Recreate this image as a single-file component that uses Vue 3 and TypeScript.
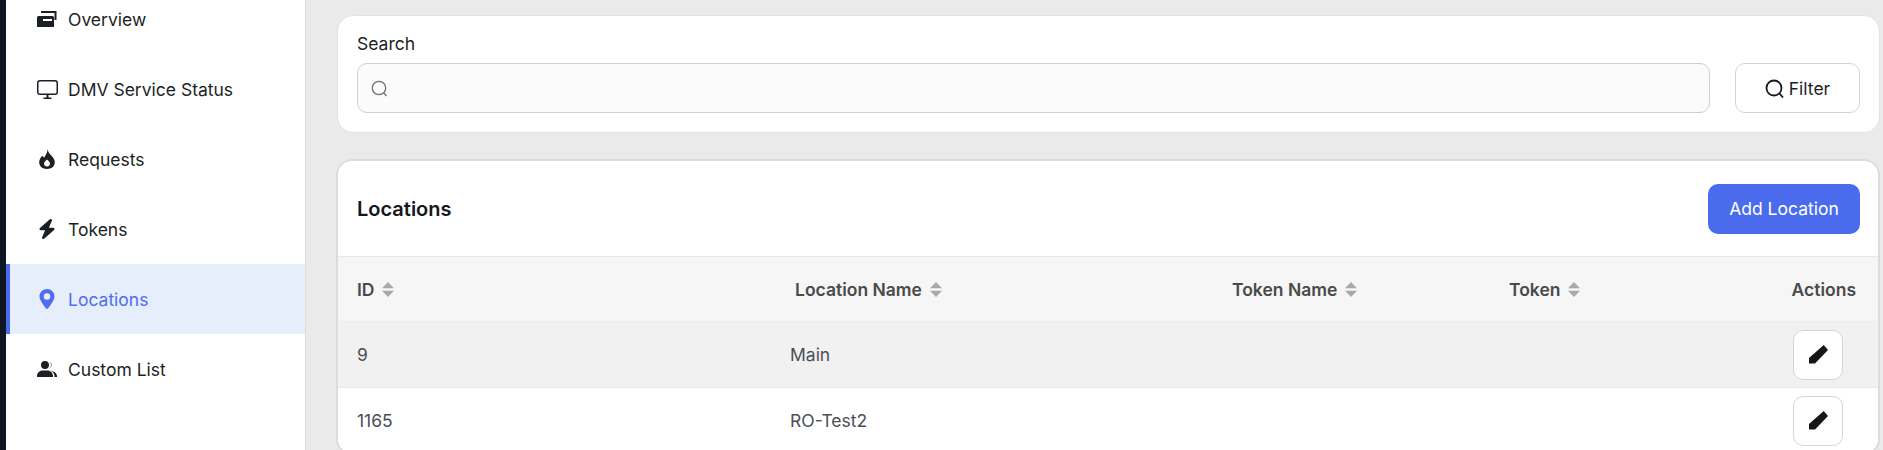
<script setup lang="ts">
interface NavItem {
  label: string;
  box: string;
  d: string;
  w: number;
  h: number;
  active?: boolean;
}

const navItems: NavItem[] = [
  {
    label: "Overview",
    box: "0 0 20 16",
    w: 20,
    h: 16,
    d: "M4 0h15.500v9h-2V2H4zM1.500 5h14A1.500 1.500 0 0 1 17 6.500V16H0V6.500A1.500 1.500 0 0 1 1.500 5zM6 8v2h9V8z",
  },
  {
    label: "DMV Service Status",
    box: "0 0 21 19",
    w: 21,
    h: 19,
    d: "M3 0h15a3 3 0 0 1 3 3v9a3 3 0 0 1-3 3H3a3 3 0 0 1-3-3V3a3 3 0 0 1 3-3zm0 1.500A1.500 1.500 0 0 0 1.500 3v9A1.500 1.500 0 0 0 3 13.500h15a1.500 1.500 0 0 0 1.500-1.500V3A1.500 1.500 0 0 0 18 1.500zM9.500 15h2v2.500h3V19h-8v-1.500h3z",
  },
  {
    label: "Requests",
    box: "0 0 16 20",
    w: 16,
    h: 20,
    d: "M8.500 0c.5 3 2 4.500 4 6.700 2 2.200 3.300 4 3.300 6.800 0 3.700-3.400 6.500-7.800 6.500S.2 17.200.2 13.500c0-2.800 1.300-5 3.300-6.700l1.500 2C6.700 6.300 8.800 3 8.500 0zM8 10.500c-1.500 1.500-3 2.600-3 4.100 0 1.700 1.300 3 3 3s3-1.300 3-3c0-1.500-1.500-2.600-3-4.100z",
  },
  {
    label: "Tokens",
    box: "0 0 448 512",
    w: 18,
    h: 20,
    d: "M349.400 44.600c5.900-13.700 1.500-29.700-10.600-38.500s-28.600-8-39.900 1.800l-256 224c-10 8.800-13.600 22.900-8.900 35.300S50.700 288 64 288H175.500L98.600 467.400c-5.900 13.700-1.500 29.700 10.600 38.500s28.600 8 39.900-1.800l256-224c10-8.800 13.600-22.900 8.900-35.300s-16.600-20.700-30-20.700H272.500L349.400 44.600z",
  },
  {
    label: "Locations",
    box: "0 0 384 512",
    w: 16,
    h: 20,
    active: true,
    d: "M215.700 499.200C267 435 384 279.400 384 192C384 86 298 0 192 0S0 86 0 192c0 87.400 117 243 168.300 307.200c12.300 15.300 35.100 15.300 47.400 0zM192 108a84 84 0 1 1 0 168 84 84 0 1 1 0-168z",
  },
  {
    label: "Custom List",
    box: "0 0 20 16",
    w: 20,
    h: 16,
    d: "M8 0a4 4 0 1 1 0 8 4 4 0 0 1 0-8zM5.500 9.500h5c3 0 5.500 2.500 5.500 5.500v1H0v-1c0-3 2.500-5.500 5.500-5.500zM12.500.5a4 4 0 0 1 0 7c1-1 1.500-2.200 1.500-3.500S13.500 1.500 12.500.5zM13.500 9.700c3.600.4 6.500 2.700 6.500 5.300v1h-2.500v-1c0-2.300-1.500-4.200-4-5.300z",
  },
];

interface Column {
  label: string;
  sortable: boolean;
}

const columns: Column[] = [
  { label: "ID", sortable: true },
  { label: "Location Name", sortable: true },
  { label: "Token Name", sortable: true },
  { label: "Token", sortable: true },
  { label: "Actions", sortable: false },
];

const rows = [
  { id: 9, name: "Main", tokenName: "", token: "" },
  { id: 1165, name: "RO-Test2", tokenName: "", token: "" },
];
</script>

<template>
  <div class="page">
    <div class="rail" />
    <aside class="sidebar">
      <nav class="nav">
        <a v-for="item in navItems" :key="item.label" class="nav-item" :class="{ active: item.active }">
          <span class="nav-icon">
            <svg :viewBox="item.box" :width="item.w" :height="item.h">
              <path :d="item.d" fill="currentColor" fill-rule="evenodd" />
            </svg>
          </span>
          <span>{{ item.label }}</span>
        </a>
      </nav>
    </aside>

    <main class="content">
      <section class="card search-card">
        <div class="search-field">
          <label class="search-label">Search</label>
          <div class="search-input">
            <svg width="17" height="17" viewBox="0 0 17 17" fill="none" stroke="#6b7078" stroke-width="1.300">
              <circle cx="8" cy="8" r="6.700" />
              <path d="M13 13l2.500 3" />
            </svg>
          </div>
        </div>
        <button class="filter-btn">
          <svg width="19" height="19" viewBox="0 0 19 19" fill="none" stroke="#161a20" stroke-width="1.800">
            <circle cx="9" cy="9" r="7.500" />
            <path d="M14.500 14.500l3.500 4" />
          </svg>
          Filter
        </button>
      </section>

      <section class="card table-card">
        <header class="table-title">
          <h2>Locations</h2>
          <button class="add-btn">Add Location</button>
        </header>
        <div class="grid head">
          <div v-for="col in columns" :key="col.label" class="head-cell">
            {{ col.label }}
            <svg v-if="col.sortable" width="12" height="15" viewBox="0 0 12 15" fill="#a9a9a9">
              <path d="M6 0l6 6.300H0zM6 15L0 8.700h12z" />
            </svg>
          </div>
        </div>
        <div v-for="row in rows" :key="row.id" class="grid row">
          <div>{{ row.id }}</div>
          <div>{{ row.name }}</div>
          <div>{{ row.tokenName }}</div>
          <div>{{ row.token }}</div>
          <div class="actions">
            <button class="edit-btn">
              <svg width="19" height="19" viewBox="0 0 19 19" fill="#161616">
                <path d="M14.700 0L19 5 6 18.500H0v-5.500z" />
              </svg>
            </button>
          </div>
        </div>
      </section>
    </main>
  </div>
</template>

<style scoped>
.page {
  display: flex;
  height: 450px;
  overflow: hidden;
  background: #eaeaea;
  font-family: Inter, "Liberation Sans", sans-serif;
  font-size: 17.5px;
  color: #1b1f26;
}

.rail {
  width: 6px;
  flex: none;
  background: #0d1621;
}

.sidebar {
  width: 299px;
  flex: none;
  background: #fff;
  border-right: 1px solid #dcdcdc;
  overflow: hidden;
}

/* page is scrolled a little, first item is cut off */
.nav {
  margin-top: -16px;
}

.nav-item {
  display: flex;
  align-items: center;
  height: 70px;
  padding-left: 25px;
  border-left: 4px solid transparent;
}

.nav-item.active {
  background: #e7eefb;
  border-left-color: #4a6cec;
  color: #4f6df0;
}

.nav-icon {
  width: 24px;
  margin-right: 9px;
  display: flex;
  justify-content: center;
  align-items: center;
}

.nav-icon svg {
  display: block;
}

.content {
  flex: 1;
  min-width: 0;
  padding: 15px 3px 0 30px;
  display: flex;
  flex-direction: column;
  gap: 26px;
}

.card {
  background: #fff;
  border-radius: 16px;
}

.search-card {
  display: flex;
  align-items: flex-end;
  gap: 25px;
  margin-left: 1px;
  padding: 18px 19px 19px;
  border: 1px solid #e3e3e3;
}

.search-field {
  flex: 1;
}

.search-label {
  display: block;
  line-height: 20px;
  margin-bottom: 9px;
}

.search-input {
  height: 50px;
  box-sizing: border-box;
  display: flex;
  align-items: center;
  padding-left: 13px;
  background: #fbfbfb;
  border: 1px solid #cfcfcf;
  border-radius: 10px;
}

.filter-btn {
  width: 125px;
  height: 50px;
  display: flex;
  align-items: center;
  justify-content: center;
  gap: 5px;
  background: #fff;
  border: 1px solid #d4d4d4;
  border-radius: 10px;
  font: inherit;
  color: inherit;
}

/* runs past the bottom of the window */
.table-card {
  flex: none;
  height: 296px;
  box-sizing: border-box;
  border: 2px solid #dcdcdc;
  overflow: hidden;
}

.table-title {
  height: 96px;
  box-sizing: border-box;
  display: flex;
  align-items: center;
  justify-content: space-between;
  padding: 0 18px 0 19px;
  border-bottom: 1px solid #e8e8e8;
}

.table-title h2 {
  margin: 0;
  font-size: 20px;
  font-weight: 600;
  color: #14171c;
}

.add-btn {
  width: 152px;
  height: 50px;
  background: #4a6cec;
  color: #fff;
  border: 0;
  border-radius: 10px;
  font: inherit;
}

.grid {
  display: grid;
  grid-template-columns: 433px 442px 277px 1fr 120px;
  align-items: center;
  padding: 0 18px 0 19px;
}

.head {
  height: 65px;
  box-sizing: border-box;
  background: #f6f6f6;
  border-bottom: 1px solid #eeeeee;
  color: #4a4a4a;
  font-weight: 600;
}

.head-cell {
  display: flex;
  align-items: center;
  gap: 8px;
}

.head-cell:nth-child(2) {
  padding-left: 5px;
}

.head-cell:last-child {
  justify-content: flex-end;
  padding-right: 4px;
}

.row {
  height: 66px;
  box-sizing: border-box;
  color: #4b4f56;
  border-bottom: 1px solid #e9e9e9;
}

.head + .row {
  background: #f1f1f1;
}

.actions {
  display: flex;
  justify-content: flex-end;
  padding-right: 17px;
}

.edit-btn {
  width: 50px;
  height: 50px;
  display: flex;
  align-items: center;
  justify-content: center;
  padding: 0;
  background: #fff;
  border: 1px solid #d4d4d4;
  border-radius: 10px;
}
</style>
